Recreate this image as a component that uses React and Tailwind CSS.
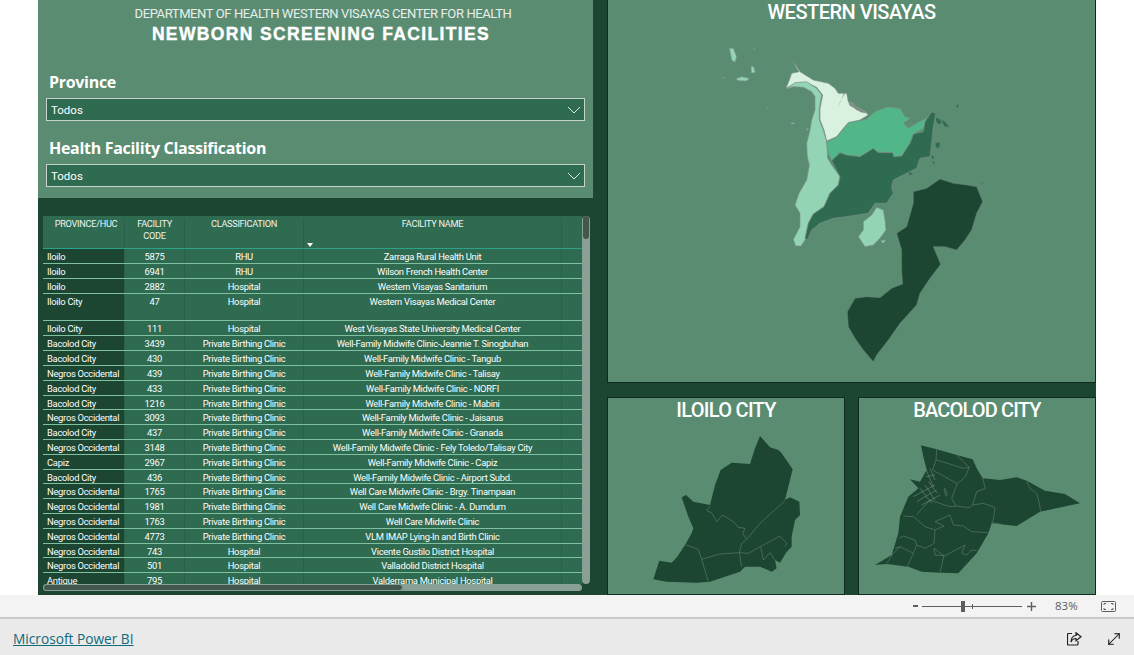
import React from 'react';
import { MoveDiagonal } from 'lucide-react';

const rows = [
  ['Iloilo', '5875', 'RHU', 'Zarraga Rural Health Unit', 'h-[15px]'],
  ['Iloilo', '6941', 'RHU', 'Wilson French Health Center', 'h-[15px]'],
  ['Iloilo', '2882', 'Hospital', 'Western Visayas Sanitarium', 'h-[15px]'],
  ['Iloilo City', '47', 'Hospital', 'Western Visayas Medical Center', 'h-[27px]'],
  ['Iloilo City', '111', 'Hospital', 'West Visayas State University Medical Center', 'h-[15px]'],
  ['Bacolod City', '3439', 'Private Birthing Clinic', 'Well-Family Midwife Clinic-Jeannie T. Sinogbuhan', 'h-[15px]'],
  ['Bacolod City', '430', 'Private Birthing Clinic', 'Well-Family Midwife Clinic - Tangub', 'h-[15px]'],
  ['Negros Occidental', '439', 'Private Birthing Clinic', 'Well-Family Midwife Clinic - Talisay', 'h-[14.8px]'],
  ['Bacolod City', '433', 'Private Birthing Clinic', 'Well-Family Midwife Clinic - NORFI', 'h-[14.8px]'],
  ['Bacolod City', '1216', 'Private Birthing Clinic', 'Well-Family Midwife Clinic - Mabini', 'h-[14.8px]'],
  ['Negros Occidental', '3093', 'Private Birthing Clinic', 'Well-Family Midwife Clinic - Jaisarus', 'h-[14.8px]'],
  ['Bacolod City', '437', 'Private Birthing Clinic', 'Well-Family Midwife Clinic - Granada', 'h-[14.8px]'],
  ['Negros Occidental', '3148', 'Private Birthing Clinic', 'Well-Family Midwife Clinic - Fely Toledo/Talisay City', 'h-[14.8px]'],
  ['Capiz', '2967', 'Private Birthing Clinic', 'Well-Family Midwife Clinic - Capiz', 'h-[14.8px]'],
  ['Bacolod City', '436', 'Private Birthing Clinic', 'Well-Family Midwife Clinic - Airport Subd.', 'h-[14.8px]'],
  ['Negros Occidental', '1765', 'Private Birthing Clinic', 'Well Care Midwife Clinic - Brgy. Tinampaan', 'h-[14.8px]'],
  ['Negros Occidental', '1981', 'Private Birthing Clinic', 'Well Care Midwife Clinic - A. Dumdum', 'h-[14.8px]'],
  ['Negros Occidental', '1763', 'Private Birthing Clinic', 'Well Care Midwife Clinic', 'h-[14.8px]'],
  ['Negros Occidental', '4773', 'Private Birthing Clinic', 'VLM IMAP Lying-In and Birth Clinic', 'h-[14.8px]'],
  ['Negros Occidental', '743', 'Hospital', 'Vicente Gustilo District Hospital', 'h-[14.8px]'],
  ['Negros Occidental', '501', 'Hospital', 'Valladolid District Hospital', 'h-[14.8px]'],
  ['Antique', '795', 'Hospital', 'Valderrama Municipal Hospital', 'h-[14.8px]'],
];

function Dropdown() {
  return (
    <div className="mx-2 h-[23px] bg-[#2f6b50] border border-[#c5d3cb] flex items-center justify-between pl-[4px] pr-[3px] text-white text-[11.5px] font-['Roboto',sans-serif] pt-[3px]">
      <span>Todos</span>
      <svg className="mb-[3px]" width="14" height="8" viewBox="0 0 14 8" fill="none" stroke="#dfe8e3" strokeWidth="1"><path d="M1 1l6 6 6-6" /></svg>
    </div>
  );
}

function WesternMap() {
  const s = { stroke: '#7f9088', strokeWidth: 2 };
  return (
    <svg width="290" height="340" viewBox="0 0 870 1020" className="ml-[92px] mt-[6px] shrink-0">
      <g {...s} fill="#92d4b4">
        <path d="M88 55L100 55 110 80 105 97 95 90z" />
        <path d="M153 108L161 110 166 127 154 130z" />
        <path d="M108 146L125 140 148 145 140 153 115 152z" />
        <path d="M272 279L284 278 281 282 273 282zM200 232L206 235 204 237zM65 141L75 143 71 145zM160 56L166 57 163 60zM318 297L326 296 322 301z" />
      </g>
      <path fill="#d9f2e0" {...s} d="M280 95L290 115 297 125 275 130 268 150 258 175 285 160 320 158 350 172 368 195 360 235 360 270 372 300 380 333 410 320 430 295 445 278 480 270 505 255 490 240 470 240 445 215 440 190 415 190 405 175 385 160 340 150 300 125z" />
      <path fill="#7f9088" d="M445 215L457 215 472 230 490 238 497 250 482 247 464 235 449 227zM415 230L432 190 436 190 420 215z" />
      <path fill="#92d4b4" {...s} d="M258 177L285 158 320 155 350 175 365 195 358 235 358 270 370 300 380 335 383 385 395 405 420 440 415 465 390 490 372 530 340 552 325 580 315 630 303 648 287 648 280 628 300 590 300 550 285 525 297 490 320 450 328 405 322 380 320 340 330 300 335 270 345 240 345 200 335 185 310 172 280 170z" />
      <path fill="#52b788" {...s} d="M380 335L410 322 432 295 445 278 500 268 525 245 560 232 600 235 615 260 630 265 610 280 625 295 650 280 685 262 670 295 640 312 630 340 605 378 580 380 578 368 530 365 515 360 480 380 440 375 420 368 395 392 385 370z" />
      <path fill="#2f6b50" {...s} d="M395 392L420 368 440 375 480 380 520 355 535 368 578 368 582 380 605 378 630 340 640 312 670 305 675 275 695 245 708 250 700 290 695 340 690 380 660 385 650 415 610 435 580 450 575 470 580 490 560 520 525 520 505 550 440 560 400 565 360 580 335 600 322 630 315 625 325 580 340 552 372 530 390 490 415 465 420 440z" />
      <path fill="#2f6b50" stroke="#6f8b7d" d="M708 262L720 268 725 278 717 284 708 274zM722 268L736 276 748 290 734 290zM705 340L719 335 720 350 710 356zM693 372L703 382 696 390zM697 392L705 396 699 404zM768 226L776 222 773 240zM625 424L640 432 628 436zM840 456L852 462 847 463z" />
      <path fill="#92d4b4" {...s} d="M530 532L550 540 555 570 558 600 540 625 520 645 495 650 475 620 490 600 490 575 515 555z" />
      <path fill="#92d4b4" {...s} d="M542 632L557 630 550 640z" />
      <path fill="#1c4532" stroke="#6f8078" strokeWidth="1.5" d="M720 447L760 460 800 465 830 470 838 490 848 515 830 550 815 600 795 630 770 660 735 650 700 650 722 703 690 745 660 790 650 825 600 880 565 930 530 975 520 995 490 960 465 925 445 890 442 845 465 805 500 800 540 803 575 775 608 762 605 720 605 660 590 610 620 590 640 520 640 485 680 475z" />
      <path fill="#6f8078" d="M800 635L812 620 814 623 802 639zM510 655L524 660 522 663zM510 678L518 679 514 682z" />
    </svg>
  );
}

function IloiloMap() {
  const l = { fill: 'none', stroke: '#70857b', strokeWidth: 1.6 };
  return (
    <svg width="236" height="169" viewBox="24 105 708 507" className="shrink-0">
      <path fill="#1c4532" d="M480 138L510 172 535 180 545 190 578 238 555 330 570 322 598 335 600 375 585 390 575 440 575 470 560 485 540 518 525 510 530 535 515 545 480 530 435 530 420 545 330 575 290 578 200 575 160 568 178 512 215 518 232 500 245 480 255 465 275 430 280 415 265 380 245 322 258 315 280 335 330 345 345 285 362 240 395 218 450 222 465 175z" />
      <path {...l} d="M330 348L320 362 335 368 350 395 368 375 400 395 415 412 435 415 428 430 440 448 480 400 555 332" />
      <path {...l} d="M440 448L425 460 418 488 360 492 305 508 295 478 258 465" />
      <path {...l} d="M305 508L325 575M418 488L425 530" />
      <path {...l} d="M418 488L445 490 490 465 540 438 560 460 555 470" />
      <path {...l} d="M482 470L490 510 510 488 525 510" />
    </svg>
  );
}

function BacolodMap() {
  const l = { fill: 'none', stroke: '#70857b', strokeWidth: 1.6 };
  return (
    <svg width="236" height="169" viewBox="27 105 708 507" className="shrink-0">
      <path fill="#1c4532" d="M213 166L260 178 320 195 368 208 380 235 398 265 450 270 500 262 530 272 585 302 645 312 690 340 570 365 500 408 425 400 415 430 380 490 325 550 270 548 215 545 175 530 110 522 75 525 125 495 145 430 150 380 175 320 205 295 180 268 210 275 230 240 220 200z" />
      <path {...l} d="M260 178L258 210 300 222 340 235 358 232M320 195L340 215 358 232 345 262 322 280 305 325 318 348 300 350" />
      <path {...l} d="M258 210L248 240 280 258 320 280" />
      <path {...l} d="M398 265L406 295 380 305 368 345 400 340 435 352 430 390 425 398 455 403M318 348L360 353 368 345" />
      <path {...l} d="M530 275L540 295 560 310 568 340 572 365" />
      <path {...l} d="M160 378L190 380 225 410 255 420 252 460 225 475 200 465 195 450 160 438 148 445" />
      <path {...l} d="M255 420L282 408 255 395 300 375 310 405 340 408 365 425 415 428" />
      <path {...l} d="M150 470L190 490 200 465M190 490L172 530M135 475L150 470M110 520L130 490 150 470" />
      <path {...l} d="M252 475L282 497 270 548M252 475L255 495 285 497 345 465 335 490 350 495 365 480 380 482" />
      <path {...l} d="M200 375L208 365 240 330 300 350" />
      <path stroke="#8c9c94" fill="none" strokeWidth="1.4" d="M190 320L255 285M200 335L260 300M215 345L270 315M210 295L245 340M225 285L255 330M235 275L262 310M228 238L250 290M240 235L255 270M228 260L255 255" />
      <path {...l} d="M285 295L292 315 288 318 283 302z" />
    </svg>
  );
}

function ShareIcon() {
  return (
    <svg width="15" height="14" viewBox="0 0 15 14" fill="none" stroke="#222" strokeWidth="1.2">
      <path d="M5 1.5H1.5a1 1 0 0 0-1 1v9.5a1 1 0 0 0 1 1H10a1 1 0 0 0 1-1V9" />
      <path d="M9 .8l5 4-5 4V6.5C6.5 6.5 5 7.5 4 10c0-4 2-6.5 5-6.5z" />
    </svg>
  );
}

export default function App() {
  const sans = "font-['Open_Sans',sans-serif]";
  return (
    <div className="w-[1134px] h-[655px] bg-white overflow-hidden flex flex-col">
      <div className="h-[595px] pl-[38px] flex shrink-0">
        <div className="w-[1058px] h-full bg-[#1c4532] flex">
          <div className="w-[555px] flex flex-col shrink-0">
            <div className="h-[198px] bg-[#5a8c72] flex flex-col shrink-0">
              <div className="pl-[15px] text-center text-[#e8efea] font-['Roboto',sans-serif] text-[13px] leading-[16px] mt-[6px] tracking-[-0.39px]">DEPARTMENT OF HEALTH WESTERN VISAYAS CENTER FOR HEALTH</div>
              <div className="pl-[11px] text-center text-white font-['Liberation_Sans',sans-serif] font-bold text-[17.5px] leading-[22px] mt-[1px] tracking-[1.35px] [-webkit-text-stroke:0.4px_white]">NEWBORN SCREENING FACILITIES</div>
              <div className={`text-white font-bold text-[16px] leading-[22px] ml-[11px] mt-[26px] mb-[5px] tracking-[-0.3px] ${sans}`}>Province</div>
              <Dropdown />
              <div className={`text-white font-bold text-[16px] leading-[22px] ml-[11px] mt-[16px] mb-[5px] tracking-[-0.3px] ${sans}`}>Health Facility Classification</div>
              <Dropdown />
            </div>
            <div className="ml-[5px] mt-[18px] w-[547px] flex flex-col text-white text-[9.4px] tracking-[-0.28px] font-['Roboto',sans-serif]">
              <div className="flex h-[368px]">
                <div className="w-[539px] overflow-hidden bg-[#2f6b50]">
                  <div className="flex h-[33px] border-b border-[#2aa38a] text-[#eef5f0] text-[9.2px] tracking-[-0.3px] leading-[12px] text-center pt-[2px]">
                    <div className="w-[81px] pl-[5px]">PROVINCE/HUC</div>
                    <div className="w-[60px] border-l border-[#2a6048]">FACILITY<br />CODE</div>
                    <div className="w-[119px] border-l border-[#2a6048]">CLASSIFICATION</div>
                    <div className="w-[258px] border-l border-[#2a6048] flex flex-col items-center relative">
                      FACILITY NAME
                      <span className="absolute left-[3px] top-[25px] w-0 h-0 border-l-[3.5px] border-r-[3.5px] border-t-[4px] border-l-transparent border-r-transparent border-t-white" />
                    </div>
                    <div className="w-[21px] border-l border-[#2a6048]" />
                  </div>
                  {rows.map((r, i) => (
                    <div key={i} className={`flex ${r[4]} border-b border-[#7fc0a0] leading-[14px] box-border`}>
                      <div className="w-[81px] bg-[#1c4532] pl-[4px] pt-[1px] whitespace-nowrap overflow-hidden">{r[0]}</div>
                      <div className="w-[60px] pt-[1px] text-center border-l border-[#2a6048]">{r[1]}</div>
                      <div className="w-[119px] pt-[1px] text-center border-l border-[#2a6048] whitespace-nowrap">{r[2]}</div>
                      <div className="w-[258px] pt-[1px] text-center border-l border-[#2a6048] whitespace-nowrap">{r[3]}</div>
                      <div className="w-[21px] border-l border-[#2a6048]" />
                    </div>
                  ))}
                </div>
                <div className="w-[8px] h-full bg-[#88a095] rounded-full">
                  <div className="w-[6px] ml-[1px] h-[23px] bg-[#44574d] rounded-full" />
                </div>
              </div>
              <div className="w-[539px] h-[7px] bg-[#88a095] rounded-full">
                <div className="w-[360px] h-full bg-[#44574d] border border-[#88a095] rounded-full" />
              </div>
            </div>
          </div>
          <div className="ml-[14px] w-[489px] flex flex-col shrink-0">
            <div className="h-[383px] bg-[#5a8c72] border border-[#0f2a1e] border-t-0 overflow-hidden flex flex-col shrink-0">
              <div className="text-center text-white font-['Roboto',sans-serif] font-medium text-[20px] leading-[24px] tracking-[-0.5px]">WESTERN VISAYAS</div>
              <WesternMap />
            </div>
            <div className="mt-[14px] flex justify-between h-[198px]">
              <div className="w-[238px] bg-[#5a8c72] border border-[#0f2a1e] overflow-hidden flex flex-col">
                <div className="text-center text-white font-['Roboto',sans-serif] font-medium text-[20px] leading-[24px] tracking-[-0.7px] h-[27px] shrink-0">ILOILO CITY</div>
                <IloiloMap />
              </div>
              <div className="w-[238px] bg-[#5a8c72] border border-[#0f2a1e] overflow-hidden flex flex-col">
                <div className="text-center text-white font-['Roboto',sans-serif] font-medium text-[20px] leading-[24px] tracking-[-0.85px] h-[27px] shrink-0">BACOLOD CITY</div>
                <BacolodMap />
              </div>
            </div>
          </div>
        </div>
      </div>
      <div className="h-[24px] bg-[#f3f3f3] border-b-2 border-[#c8c8c8] flex items-center shrink-0 text-[#605e5c]">
        <div className="ml-[913px] w-[5px] h-[2px] bg-[#605e5c]" />
        <div className="ml-[4px] w-[100px] h-px bg-[#605e5c] relative">
          <div className="absolute left-[39px] top-[-5px] w-[4px] h-[11px] bg-[#605e5c]" />
          <div className="absolute left-[50px] top-[-2px] w-px h-[5px] bg-[#605e5c]" />
        </div>
        <svg className="ml-[5px]" width="9" height="9" viewBox="0 0 9 9" stroke="#605e5c" strokeWidth="1.4"><path d="M0 4.5h9M4.5 0v9" /></svg>
        <div className={`ml-[19px] text-[11.5px] w-[26px] ${sans}`}>83%</div>
        <svg className="ml-[20px]" width="15" height="11" viewBox="0 0 15 11" fill="none" stroke="#605e5c">
          <rect x="0.5" y="0.5" width="14" height="10" rx="1" />
          <path d="M3 4V2.5h2M12 4V2.5h-2M3 7v1.5h2M12 7v1.5h-2" />
        </svg>
      </div>
      <div className="flex-1 bg-[#eaeaea] flex items-center pt-[4px]">
        <a className={`ml-[13px] text-[13.7px] text-[#0f6b78] underline ${sans}`}>Microsoft Power BI</a>
        <div className="ml-auto flex items-center">
          <ShareIcon />
          <MoveDiagonal className="ml-[23px] mr-[11px]" size={18} strokeWidth={1.4} color="#111" />
        </div>
      </div>
    </div>
  );
}
